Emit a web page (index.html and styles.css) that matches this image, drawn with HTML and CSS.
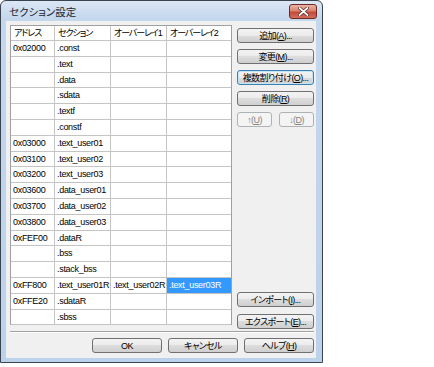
FILE: index.html
```html
<!DOCTYPE html>
<html>
<head>
  <meta charset="UTF-8">
  <title>セクション設定</title>
  <link rel="stylesheet" href="styles.css">
</head>
<body>
  <div class="window">
    <div class="titlebar">
      <span class="title">セクション設定</span>
      <div class="close">
        <svg width="11" height="9" viewBox="0 0 11 9">
          <path d="M1.5 1 L9.5 8 M9.5 1 L1.5 8" stroke="#5a1f1a" stroke-width="3.2" stroke-linecap="round"/>
          <path d="M1.5 1 L9.5 8 M9.5 1 L1.5 8" stroke="#fff" stroke-width="1.8" stroke-linecap="round"/>
        </svg>
      </div>
    </div>

    <div class="client">
      <div class="main">
        <div class="grid">
          <div class="row head">
            <div class="cell">アドレス</div>
            <div class="cell">セクション</div>
            <div class="cell">オーバーレイ1</div>
            <div class="cell">オーバーレイ2</div>
          </div>
          <div class="row"><div class="cell">0x02000</div><div class="cell">.const</div><div class="cell"></div><div class="cell"></div></div>
          <div class="row"><div class="cell"></div><div class="cell">.text</div><div class="cell"></div><div class="cell"></div></div>
          <div class="row"><div class="cell"></div><div class="cell">.data</div><div class="cell"></div><div class="cell"></div></div>
          <div class="row"><div class="cell"></div><div class="cell">.sdata</div><div class="cell"></div><div class="cell"></div></div>
          <div class="row"><div class="cell"></div><div class="cell">.textf</div><div class="cell"></div><div class="cell"></div></div>
          <div class="row"><div class="cell"></div><div class="cell">.constf</div><div class="cell"></div><div class="cell"></div></div>
          <div class="row"><div class="cell">0x03000</div><div class="cell">.text_user01</div><div class="cell"></div><div class="cell"></div></div>
          <div class="row"><div class="cell">0x03100</div><div class="cell">.text_user02</div><div class="cell"></div><div class="cell"></div></div>
          <div class="row"><div class="cell">0x03200</div><div class="cell">.text_user03</div><div class="cell"></div><div class="cell"></div></div>
          <div class="row"><div class="cell">0x03600</div><div class="cell">.data_user01</div><div class="cell"></div><div class="cell"></div></div>
          <div class="row"><div class="cell">0x03700</div><div class="cell">.data_user02</div><div class="cell"></div><div class="cell"></div></div>
          <div class="row"><div class="cell">0x03800</div><div class="cell">.data_user03</div><div class="cell"></div><div class="cell"></div></div>
          <div class="row"><div class="cell">0xFEF00</div><div class="cell">.dataR</div><div class="cell"></div><div class="cell"></div></div>
          <div class="row"><div class="cell"></div><div class="cell">.bss</div><div class="cell"></div><div class="cell"></div></div>
          <div class="row"><div class="cell"></div><div class="cell">.stack_bss</div><div class="cell"></div><div class="cell"></div></div>
          <div class="row"><div class="cell">0xFF800</div><div class="cell">.text_user01R</div><div class="cell">.text_user02R</div><div class="cell selected">.text_user03R</div></div>
          <div class="row"><div class="cell">0xFFE20</div><div class="cell">.sdataR</div><div class="cell"></div><div class="cell"></div></div>
          <div class="row"><div class="cell"></div><div class="cell">.sbss</div><div class="cell"></div><div class="cell"></div></div>
        </div>

        <div class="side">
          <div class="side-group">
            <div class="btn">追加(<u>A</u>)...</div>
            <div class="btn">変更(<u>M</u>)...</div>
            <div class="btn focus">複数割り付け(<u>O</u>)...</div>
            <div class="btn">削除(<u>R</u>)</div>
            <div class="btn-pair">
              <div class="btn disabled">↑(<u>U</u>)</div>
              <div class="btn disabled">↓(<u>D</u>)</div>
            </div>
          </div>
          <div class="side-group io">
            <div class="btn">インポート(<u>I</u>)...</div>
            <div class="btn">エクスポート(<u>E</u>)...</div>
          </div>
        </div>
      </div>

      <div class="separator"></div>

      <div class="footer">
        <div class="btn">OK</div>
        <div class="btn">キャンセル</div>
        <div class="btn">ヘルプ(<u>H</u>)</div>
      </div>
    </div>
  </div>
</body>
</html>
```

FILE: styles.css
```css
body {
  margin: 0;
  background-color: #fff;
  font-family: "Liberation Sans", "Noto Sans CJK JP", sans-serif;
  color: #000;
}
.window {
  width: 323px;
  height: 363px;
  box-sizing: border-box;
  border: 1px solid #3a4450;
  border-radius: 6px 6px 0 0;
  background: linear-gradient(#dce7f4, #c3d7ed 18px, #bcd2ea);
  padding: 0 6px 4px 5px;
  display: flex;
  flex-direction: column;
}
.titlebar {
  height: 20px;
  display: flex;
  align-items: center;
  justify-content: space-between;
}
.title {
  font-family: "Noto Sans CJK JP", sans-serif;
  font-size: 10.5px;
  font-feature-settings: "palt";
  color: #1a2633;
  padding-left: 3px;
}
.close {
  width: 26px;
  height: 13px;
  margin-right: -1px;
  border: 1px solid #6e2a24;
  border-radius: 3px;
  background: linear-gradient(#eab3a6, #d98571 45%, #c7493a 55%, #d2705c);
  display: flex;
  align-items: center;
  justify-content: center;
}
.client {
  flex: 1;
  background-color: #f0f0f0;
  padding: 4px 2px 0 4px;
}
.main {
  display: flex;
  align-items: flex-start;
  gap: 5px;
}
.grid {
  width: 222px;
  box-sizing: border-box;
  border: 1px solid #a0a0a0;
  border-bottom: none;
  background-color: #fff;
}
.row {
  display: flex;
  height: 15.8px;
  box-sizing: border-box;
  border-bottom: 1px solid #c4c4c4;
}
.row.head {
  height: 15px;
}
.cell {
  font-size: 9px;
  letter-spacing: -0.3px;
  line-height: 14px;
  padding-left: 2px;
  box-sizing: border-box;
  border-right: 1px solid #c4c4c4;
  white-space: nowrap;
  overflow: hidden;
}
.cell:nth-child(1) { width: 44px; }
.cell:nth-child(2) { width: 56px; }
.cell:nth-child(3) { width: 56px; }
.cell:nth-child(4) { width: 64px; border-right: none; }
.head .cell {
  font-size: 9px;
  letter-spacing: -1.1px;
  font-feature-settings: "palt";
  padding-left: 3px;
}
.cell.selected {
  background-color: #3399ff;
  color: #fff;
}
.side {
  width: 77px;
  height: 304px;
  padding-top: 3px;
  box-sizing: border-box;
  display: flex;
  flex-direction: column;
  justify-content: space-between;
}
.side-group {
  display: flex;
  flex-direction: column;
  gap: 6px;
}
.side-group.io {
  gap: 7px;
}
.btn-pair {
  display: flex;
  justify-content: space-between;
}
.btn-pair .btn {
  width: 35px;
}
.btn {
  height: 15px;
  box-sizing: border-box;
  border: 1px solid #707070;
  border-radius: 3px;
  background: linear-gradient(#f3f3f3, #ebebeb 50%, #dddddd 50%, #cfcfcf);
  font-size: 9px;
  letter-spacing: -0.6px;
  font-feature-settings: "palt";
  display: flex;
  align-items: center;
  justify-content: center;
  white-space: nowrap;
}
.btn.focus {
  border-color: #3c7fb1;
  box-shadow: inset 0 0 0 1px #c4e5f6;
}
.btn.disabled {
  border-color: #adb2b5;
  background: #f4f4f4;
  color: #838383;
}
.separator {
  margin-top: 2px;
  border-top: 1px solid #a0a0a0;
  border-bottom: 1px solid #fff;
}
.footer {
  display: flex;
  justify-content: flex-end;
  gap: 6px;
  margin-top: 5px;
}
.footer .btn {
  width: 70px;
}
```
